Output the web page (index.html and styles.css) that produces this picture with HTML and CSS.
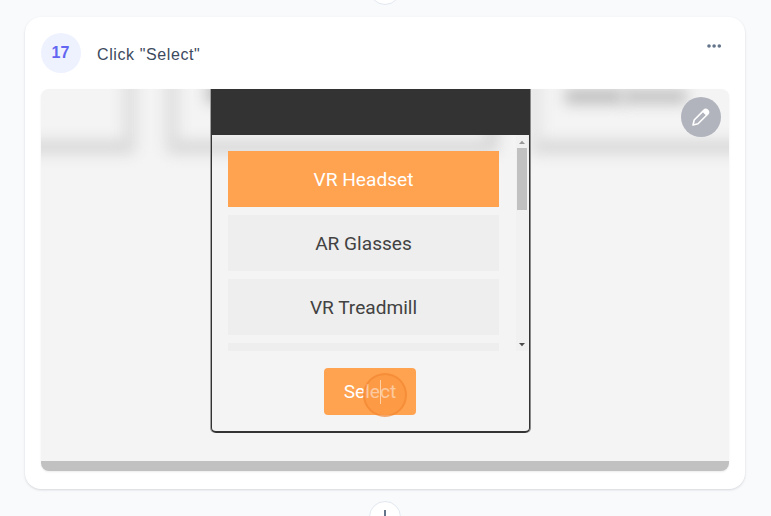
FILE: index.html
```html
<!DOCTYPE html>
<html lang="en">
<head>
<meta charset="utf-8">
<title>Step 17</title>
<link rel="stylesheet" href="styles.css">
</head>
<body>
<div class="page">
  <div class="connector connector-top"></div>
  <article class="card">
    <header class="card-head">
      <span class="number">17</span>
      <h1 class="title">Click "Select"</h1>
      <svg class="more" width="16" height="6" viewBox="0 0 16 6"><circle cx="3" cy="3" r="1.8"/><circle cx="8.1" cy="3" r="1.8"/><circle cx="13.3" cy="3" r="1.8"/></svg>
    </header>
    <div class="shot">
      <div class="backdrop">
        <i class="ghost ghost-a"></i><i class="ghost ghost-b"></i><i class="ghost ghost-c"></i>
        <i class="smudge smudge-a"></i><i class="smudge smudge-b"></i><i class="smudge smudge-c"></i>
      </div>
      <section class="dialog">
        <div class="dialog-head"></div>
        <div class="dialog-body">
          <ul class="list">
            <li class="item selected">VR Headset</li>
            <li class="item">AR Glasses</li>
            <li class="item">VR Treadmill</li>
            <li class="item"></li>
          </ul>
          <div class="scrollbar">
            <svg width="12" height="11" viewBox="0 0 12 11"><path fill="#999" d="M3 7h6L6 3.7z"/></svg>
            <span class="thumb"></span>
            <svg class="down" width="12" height="12" viewBox="0 0 12 12"><path fill="#4b4b4b" d="M3 4h6L6 7.3z"/></svg>
          </div>
        </div>
        <div class="actions">
          <div class="select">Select<span class="click"></span></div>
        </div>
      </section>
      <div class="edit">
        <svg width="20" height="20" viewBox="0 0 20 20"><path d="M2 18l1.2-5L12.8 3.4a2.6 2.6 0 0 1 3.8 3.8L7 16.8z" fill="none" stroke="#fff" stroke-width="1.6" stroke-linejoin="round"/><path d="M11.4 4.8l1.7-1.7a2.5 2.5 0 0 1 3.7 3.7l-1.7 1.7z" fill="#fff"/></svg>
      </div>
      <div class="shot-foot"></div>
    </div>
  </article>
  <div class="connector connector-bottom"><span class="stem"></span></div>
</div>
</body>
</html>
```
FILE: styles.css
```css
* { box-sizing: border-box; }
body { margin: 0; background: #f8fafc; overflow: hidden; }
.page {
  height: 516px;
  overflow: hidden;
  display: flex;
  flex-direction: column;
  align-items: center;
  padding-right: 1px;
}
.connector {
  width: 32px;
  height: 32px;
  flex: none;
  border: 1px solid #e2e8f0;
  border-radius: 50%;
  background: #fff;
}
.connector-top { margin: -27px 0 12px; }
.connector-bottom { margin-top: 12px; display: flex; justify-content: center; padding-top: 8px; }
.stem { width: 2px; height: 14px; background: #64748b; }
.card {
  width: 720px;
  height: 472px;
  flex: none;
  padding: 16px;
  background: #fff;
  border-radius: 16px;
  box-shadow: 0 1px 3px rgba(15, 23, 42, .1), 0 1px 2px rgba(15, 23, 42, .05);
}
.card-head { display: flex; height: 56px; align-items: flex-start; }
.number {
  width: 40px;
  height: 40px;
  border-radius: 50%;
  background: #eef2ff;
  color: #6366f1;
  font: 700 16px/39px "Liberation Sans", sans-serif;
  text-align: center;
  padding-right: 1px;
}
.title {
  margin: 10px 0 0 16px;
  flex: 1;
  color: #3c4a5e;
  font: 400 16px/24px "Liberation Sans", sans-serif;
  letter-spacing: .6px;
}
.more { margin: 10px 7px 0 0; fill: #64748b; }
.shot {
  position: relative;
  height: 382px;
  display: flex;
  flex-direction: column;
  align-items: center;
  border-radius: 8px;
  overflow: hidden;
  background: #f4f4f4;
  box-shadow: 0 1px 2px rgba(0, 0, 0, .08);
}
.backdrop { position: absolute; inset: 0; }
.ghost {
  position: absolute;
  top: -60px;
  height: 125px;
  border: 14px solid #d8d8d8;
  border-radius: 8px;
  filter: blur(7px);
}
.ghost-a { left: -60px; width: 156px; border-right-color: #dfdfdf; }
.ghost-b { left: 124px; width: 334px; border-left-color: #dfdfdf; }
.ghost-c { left: 487px; width: 260px; border-left-color: #e6e6e6; }
.smudge { position: absolute; background: #bebebe; filter: blur(7px); }
.smudge-a { left: 165px; top: -6px; width: 40px; height: 20px; }
.smudge-b { left: 524px; top: 0; width: 58px; height: 15px; }
.smudge-c { left: 582px; top: 0; width: 64px; height: 15px; opacity: .9; }
.dialog {
  position: relative;
  width: 319px;
  height: 344px;
  margin: 0 29px 0 0;
  display: flex;
  flex-direction: column;
  border: solid #333;
  border-width: 0 1px 2px;
  border-radius: 0 0 5px 5px;
  box-shadow: -1px 0 0 #a0a0a0, 1px 0 0 #8a8a8a;
  font-family: Roboto, sans-serif;
  font-size: 19.1px;
}
.dialog-head { height: 46px; flex: none; background: #333; }
.dialog-body {
  height: 216px;
  flex: none;
  display: flex;
  justify-content: space-between;
  padding: 0 1px 0 16px;
}
.list {
  width: 271px;
  margin: 0;
  padding: 16px 0 0;
  list-style: none;
  display: flex;
  flex-direction: column;
  gap: 8px;
  overflow: hidden;
}
.item {
  height: 56px;
  flex: none;
  background: #eee;
  color: #424242;
  line-height: 57px;
  text-align: center;
}
.selected { background: #ffa350; color: #fff; }
.scrollbar {
  width: 12px;
  padding-top: 2px;
  background: #f1f1f1;
  display: flex;
  flex-direction: column;
}
.scrollbar svg { display: block; flex: none; }
.thumb { width: 10px; height: 62px; margin-left: 1px; background: #c1c1c1; }
.scrollbar .down { margin-top: auto; }
.actions { display: flex; justify-content: center; padding: 17px 1px 0 0; }
.select {
  position: relative;
  width: 92px;
  height: 47px;
  border-radius: 4px;
  background: #ffa350;
  color: #fff;
  line-height: 48px;
  text-align: center;
}
.click {
  position: absolute;
  left: 39px;
  top: 5px;
  width: 44px;
  height: 44px;
  border: 2px solid rgba(238, 123, 35, .4);
  border-radius: 50%;
  background: rgba(249, 146, 60, .5);
}
.click::after {
  content: "";
  position: absolute;
  left: 15px;
  top: 5px;
  width: 1px;
  height: 24px;
  background: #ffd2a6;
}
.edit {
  position: absolute;
  right: 8px;
  top: 8px;
  width: 40px;
  height: 40px;
  display: flex;
  align-items: center;
  justify-content: center;
  border-radius: 50%;
  background: #b1b4bd;
}
.shot-foot { width: 100%; height: 10px; margin-top: auto; flex: none; background: #c1c1c1; }
```
